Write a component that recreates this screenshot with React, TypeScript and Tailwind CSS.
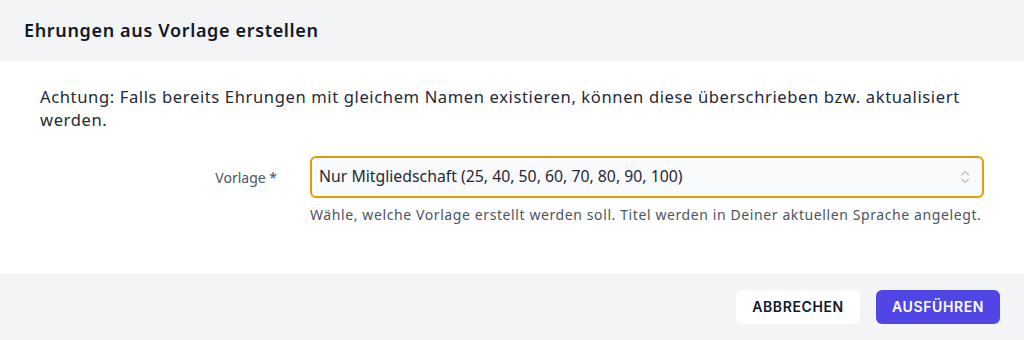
import React, { useState } from 'react';

const templates = [
  'Nur Mitgliedschaft (25, 40, 50, 60, 70, 80, 90, 100)',
  'Mitgliedschaft und Funktionen',
  'Alle Ehrungen',
];

const ChevronUpDown: React.FC = () => (
  <svg width="14" height="18" viewBox="0 0 14 18" fill="none" stroke="#c4c8cf" strokeWidth="1.4" strokeLinecap="round" strokeLinejoin="round">
    <path d="M3.5 7 L7 3.5 L10.5 7" />
    <path d="M3.5 11 L7 14.5 L10.5 11" />
  </svg>
);

export default function App() {
  const [template, setTemplate] = useState(templates[0]);

  return (
    <div className="w-[1024px] h-[340px] bg-white flex flex-col text-[#111827]" style={{ fontFamily: '"Noto Sans", sans-serif' }}>
      <div className="h-[61px] bg-[#f3f4f6] flex items-center px-6">
        <h2 className="text-[18px] font-semibold tracking-[0.65px]">Ehrungen aus Vorlage erstellen</h2>
      </div>

      <div className="flex-1 px-10 pt-[24px]">
        <p className="text-[16.6px] leading-[23px] tracking-[0.6px] text-[#1f2937]">
          Achtung: Falls bereits Ehrungen mit gleichem Namen existieren, können diese überschrieben bzw. aktualisiert werden.
        </p>

        <div className="flex mt-[25px]">
          <label className="w-[238px] shrink-0 text-right text-[14px] text-[#4b5563] pt-[11px] pr-[1px]">Vorlage *</label>
          <div className="ml-[32px] flex-1">
            <div className="relative">
              <select
                value={template}
                onChange={(e) => setTemplate(e.target.value)}
                className="appearance-none w-full h-[42px] rounded-md border-2 border-[#e59a0a] bg-[#f9fafb] pl-[7px] pr-10 text-[15.8px] text-[#1f2937] outline-none"
              >
                {templates.map((t) => (
                  <option key={t} value={t}>{t}</option>
                ))}
              </select>
              <span className="pointer-events-none absolute right-[12px] top-[12px]">
                <ChevronUpDown />
              </span>
            </div>
            <p className="mt-[7px] text-[14px] leading-[20px] tracking-[0.6px] whitespace-nowrap text-[#4b5563]">
              Wähle, welche Vorlage erstellt werden soll. Titel werden in Deiner aktuellen Sprache angelegt.
            </p>
          </div>
        </div>
      </div>

      <div className="h-[67px] bg-[#f3f4f6] flex items-center justify-end gap-4 px-6">
        <button className="w-[124px] h-[34px] rounded-md bg-white text-[14px] font-semibold tracking-[0.6px] text-[#111827]" style={{ fontFamily: 'Inter, sans-serif' }}>
          ABBRECHEN
        </button>
        <button className="w-[124px] h-[34px] rounded-md bg-[#4f46e5] text-[14px] font-semibold tracking-[0.6px] text-white" style={{ fontFamily: 'Inter, sans-serif' }}>
          AUSFÜHREN
        </button>
      </div>
    </div>
  );
}
